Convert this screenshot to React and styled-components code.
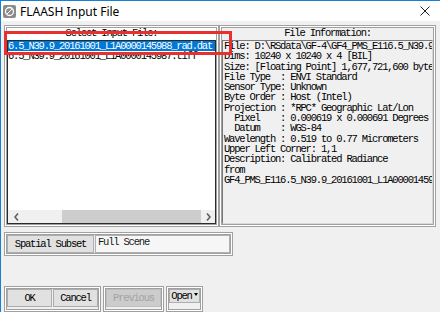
import React from 'react'
import styled, { createGlobalStyle } from 'styled-components'

const mono = `"Liberation Mono", "DejaVu Sans Mono", monospace`

const GlobalStyle = createGlobalStyle`
  html, body { margin: 0; padding: 0; background: #f0f0f0; }
  body { width: 440px; height: 312px; overflow: hidden; }
`

const Window = styled.div`
  position: relative;
  width: 440px;
  height: 312px;
  box-sizing: border-box;
  border-top: 1px solid #1a7fd4;
  border-left: 1px solid #1a7fd4;
  background: #f0f0f0;
  font-family: ${mono};
  font-size: 10.5px;
  letter-spacing: -1.2px;
  color: #000;
  overflow: hidden;
`

const TitleBar = styled.div`
  height: 20px;
  background: #fff;
  display: flex;
  align-items: center;
  padding: 0 10px 0 2px;
  font-family: "Noto Sans", "Open Sans", sans-serif;
  font-size: 12px;
  letter-spacing: 0;
`

const Title = styled.span`
  margin-left: 4px;
  flex: 1;
`

const Body = styled.div`
  padding: 4px 0 0 3px;
`

const Row = styled.div`
  display: flex;
  gap: ${p => p.gap || 0}px;
  margin-top: ${p => p.top || 0}px;
  align-items: flex-start;
`

// etched ENVI style frame
const Frame = styled.div`
  box-sizing: border-box;
  width: ${p => p.w}px;
  ${p => p.h && `height: ${p.h}px;`}
  border: 1px solid #a0a0a0;
  box-shadow: inset 0 0 0 1px #fff, inset 0 0 0 2px #a0a0a0;
  padding: 2px 2px ${p => p.pb || 2}px;
  display: flex;
  flex-direction: ${p => p.col ? 'column' : 'row'};
  gap: ${p => p.gap || 0}px;
`

const Label = styled.div`
  height: 12px;
  line-height: 11px;
  text-align: center;
  background: ${p => p.white ? '#fff' : 'transparent'};
`

const ListBox = styled.div`
  height: 184px;
  box-sizing: border-box;
  border: 1px solid #2b2b2b;
  background: #fff;
  display: flex;
  flex-direction: column;
`

const Rows = styled.div`
  flex: 1;
  overflow: hidden;
`

const Item = styled.div`
  height: 10px;
  line-height: 10px;
  white-space: pre;
  overflow: hidden;
  background: ${p => p.selected ? '#0078d7' : 'transparent'};
  color: ${p => p.selected ? '#fff' : '#000'};
`

const HScroll = styled.div`
  height: 13px;
  background: #f0f0f0;
  display: flex;
  align-items: stretch;
`

const Arrow = styled.div`
  width: ${p => p.w}px;
  display: flex;
  align-items: center;
  justify-content: center;
`

const Track = styled.div`
  flex: 1;
  position: relative;
`

const Thumb = styled.div`
  position: absolute;
  top: 0;
  bottom: 0;
  background: #cdcdcd;
`

const InfoBox = styled.div`
  height: 184px;
  box-sizing: border-box;
  border: 1px solid #7a7a7a;
  border-right-color: #d8d8d8;
  border-bottom-color: #d8d8d8;
  padding: 0 0 0 1px;
  overflow: hidden;
  white-space: pre;
  line-height: 10.3px;
`

const Button = styled.div`
  box-sizing: border-box;
  width: ${p => p.w}px;
  height: ${p => p.h || 18}px;
  display: flex;
  align-items: center;
  justify-content: center;
  gap: 2px;
  background: ${p => p.disabled ? '#cccccc' : '#e1e1e1'};
  border: 1px solid ${p => p.disabled ? '#bfbfbf' : '#adadad'};
  color: ${p => p.disabled ? '#a3a3a3' : '#000'};
  white-space: pre;
`

const Field = styled.div`
  box-sizing: border-box;
  flex: 1;
  height: 18px;
  margin-left: 1px;
  border: 1px solid #b0b0b0;
  background: #f6f6f6;
  padding: 1px 2px;
  line-height: 11px;
  color: #1a1a1a;
`

const Caret = styled.span`
  width: 0;
  height: 0;
  border-left: 2.5px solid transparent;
  border-right: 2.5px solid transparent;
  border-top: 3px solid #000;
  margin-top: -3px;
`

const Callout = styled.div`
  position: absolute;
  left: 3px;
  top: 30px;
  width: 228px;
  height: 24px;
  box-sizing: border-box;
  border: 3px solid #e8302c;
  pointer-events: none;
`

const AppIcon = () => (
  <svg width="13" height="13" viewBox="0 0 13 13">
    <rect x="0" y="0" width="13" height="13" rx="2" fill="#8a8a8a" />
    <circle cx="6.5" cy="6.5" r="4" fill="none" stroke="#fff" strokeWidth="1.3" />
    <path d="M4 9 L9 4" stroke="#fff" strokeWidth="1" />
  </svg>
)

const CloseIcon = () => (
  <svg width="10" height="10" viewBox="0 0 10 10">
    <path d="M0.5 0.5 L9.5 9.5 M9.5 0.5 L0.5 9.5" stroke="#222" strokeWidth="1" />
  </svg>
)

const Chevron = ({ dir }) => (
  <svg width="5" height="8" viewBox="0 0 5 8">
    <path d={dir === 'left' ? 'M4 0.5 L1 4 L4 7.5' : 'M1 0.5 L4 4 L1 7.5'} fill="none" stroke="#606060" strokeWidth="1.6" />
  </svg>
)

const files = [
  '6.5_N39.9_20161001_L1A0000145988_rad.dat',
  '6.5_N39.9_20161001_L1A0000145987.tiff',
]

const info = [
  'File: D:\\RSdata\\GF-4\\GF4_PMS_E116.5_N39.9_20161001_L1A0000145988_rad.dat',
  'Dims: 10240 x 10240 x 4 [BIL]',
  'Size: [Floating Point] 1,677,721,600 bytes.',
  'File Type  : ENVI Standard',
  'Sensor Type: Unknown',
  'Byte Order : Host (Intel)',
  'Projection : *RPC* Geographic Lat/Lon',
  '  Pixel    : 0.000619 x 0.000691 Degrees',
  '  Datum    : WGS-84',
  'Wavelength : 0.519 to 0.77 Micrometers',
  'Upper Left Corner: 1,1',
  'Description: Calibrated Radiance',
  'from',
  'GF4_PMS_E116.5_N39.9_20161001_L1A0000145988.tiff',
]

export default function App() {
  return (
    <>
      <GlobalStyle />
      <Window>
        <TitleBar>
          <AppIcon />
          <Title>FLAASH Input File</Title>
          <CloseIcon />
        </TitleBar>
        <Body>
          <Row>
            <Frame w={215} h={202} col>
              <Label white>Select Input File:</Label>
              <ListBox>
                <Rows>
                  {files.map((f, i) => (
                    <Item key={f} selected={i === 0}>{f}</Item>
                  ))}
                </Rows>
                <HScroll>
                  <Arrow w={17}><Chevron dir="left" /></Arrow>
                  <Track>
                    <Thumb style={{ left: 37, right: 0 }} />
                  </Track>
                  <Arrow w={14}><Chevron dir="right" /></Arrow>
                </HScroll>
              </ListBox>
            </Frame>
            <Frame w={217} h={202} col>
              <Label>File Information:</Label>
              <InfoBox>{info.join('\n')}</InfoBox>
            </Frame>
          </Row>
          <Row top={5}>
            <Frame w={229}>
              <Button w={87}>Spatial Subset</Button>
              <Field>Full Scene</Field>
            </Frame>
          </Row>
          <Row top={30} gap={2}>
            <Frame w={97} pb={4} gap={1}>
              <Button w={45}>OK</Button>
              <Button w={45}>Cancel</Button>
            </Frame>
            <Frame w={61} pb={4}>
              <Button w={55} disabled>Previous</Button>
            </Frame>
            <Frame w={37} h={26}>
              <Button w={31} h={14}>Open<Caret /></Button>
            </Frame>
          </Row>
        </Body>
        <Callout />
      </Window>
    </>
  )
}
